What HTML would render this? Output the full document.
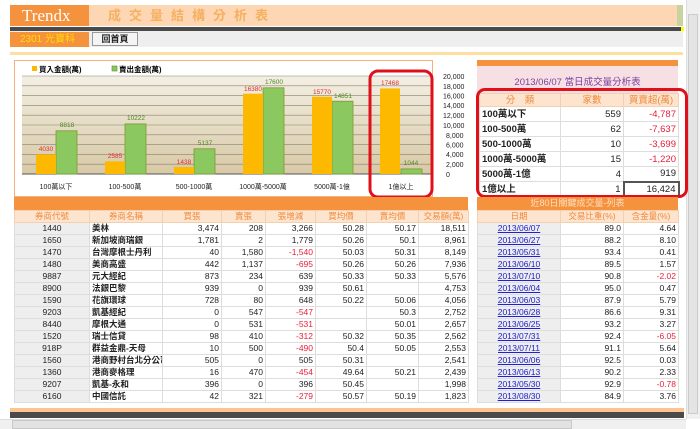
<!DOCTYPE html>
<html><head><meta charset="utf-8"><style>
*{margin:0;padding:0;box-sizing:border-box}
body{width:700px;height:429px;background:#fff;position:relative;overflow:hidden;font-family:"Liberation Sans","Noto Sans CJK TC",sans-serif;font-size:9px;color:#222}
.a{position:absolute}
table{border-collapse:collapse;position:absolute;font-size:8.5px;table-layout:fixed}
td{border:1px solid #ddd;height:12px;line-height:11px;padding:0 2px;text-align:right;white-space:nowrap;overflow:hidden}
th{font-weight:normal;color:#f08a3a;background:#fde4cf;border:1px solid #f5d0b0;height:12px;line-height:11px}
td.c{text-align:center;background:#eee}
td.l{text-align:left;font-weight:bold}
.r{color:#e8203a}
a{color:#2020d0;text-decoration:underline}
</style></head><body>
<!-- header -->
<div class="a" style="left:10px;top:5px;width:667px;height:21px;background:#fdd6b4"></div>
<div class="a" style="left:677px;top:5px;width:6px;height:21px;background:#c8d4a0"></div>
<div class="a" style="left:10px;top:5px;width:79px;height:21px;background:#f5923e;color:#fff;font-family:'Liberation Serif',serif;font-size:17px;line-height:21px;padding-left:12px">Trendx</div>
<div class="a" style="left:108px;top:6px;color:#f5b060;font-size:13px;font-weight:bold;letter-spacing:8px;line-height:19px">成交量結構分析表</div>
<div class="a" style="left:10px;top:27px;width:673px;height:4px;background:#4a4a4a"></div>
<div class="a" style="left:681px;top:27px;width:3px;height:4px;background:#ff0"></div>
<div class="a" style="left:10px;top:31px;width:673px;height:16px;background:#eee"></div>
<div class="a" style="left:10px;top:32px;width:79px;height:15px;background:#f5923e;color:#fd0;font-size:10px;line-height:15px;padding-left:10px">2301 光寶科</div>
<div class="a" style="left:92px;top:32px;width:46px;height:14px;background:#f4f4f4;border:1px solid #999;font-size:9px;font-weight:bold;text-align:center;line-height:12px">回首頁</div>
<div class="a" style="left:10px;top:52px;width:673px;height:3px;background:#fddfa0"></div>
<!-- right scrollbar -->
<div class="a" style="left:686px;top:0;width:14px;height:419px;background:#f0f0f0;border-left:1px solid #ddd"></div>
<div class="a" style="left:688px;top:14px;width:10px;height:400px;background:#e4e4e4;border:1px solid #ccc"></div>
<!-- chart panel -->
<div class="a" style="left:14px;top:60px;width:419px;height:137px;border:1px solid #f5b080;background:#fff"></div>
<svg class="a" style="left:0;top:0" width="700" height="200">
<defs><linearGradient id="g" x1="0" y1="0" x2="0" y2="1"><stop offset="0" stop-color="#f3efe3"/><stop offset="1" stop-color="#d8c9a6"/></linearGradient></defs>
<rect x="22" y="76" width="410" height="98" fill="url(#g)"/>
<g stroke="#8a8070" stroke-width="0.6">
<line x1="22" y1="76" x2="432" y2="76"/><line x1="22" y1="85.8" x2="432" y2="85.8"/><line x1="22" y1="95.6" x2="432" y2="95.6"/><line x1="22" y1="105.4" x2="432" y2="105.4"/><line x1="22" y1="115.2" x2="432" y2="115.2"/><line x1="22" y1="125" x2="432" y2="125"/><line x1="22" y1="134.8" x2="432" y2="134.8"/><line x1="22" y1="144.6" x2="432" y2="144.6"/><line x1="22" y1="154.4" x2="432" y2="154.4"/><line x1="22" y1="164.2" x2="432" y2="164.2"/>
</g>
<line x1="22" y1="174" x2="432" y2="174" stroke="#555" stroke-width="1"/>
<g stroke="#7a9a30" stroke-width="0.8" fill="#8cc860">
<rect x="56" y="130.8" width="21" height="43.2"/><rect x="125" y="123.9" width="21" height="50.1"/><rect x="194" y="148.8" width="21" height="25.2"/><rect x="263" y="87.8" width="21" height="86.2"/><rect x="332" y="101.2" width="21" height="72.8"/><rect x="401" y="168.9" width="21" height="5.1"/>
</g>
<g fill="#fdb900">
<rect x="36" y="154.3" width="20" height="19.7"/><rect x="105" y="161.3" width="20" height="12.7"/><rect x="174" y="167" width="20" height="7"/><rect x="243" y="93.7" width="20" height="80.3"/><rect x="312" y="96.7" width="20" height="77.3"/><rect x="380" y="88.4" width="20" height="85.6"/>
</g>
<g font-size="6.5" text-anchor="middle" font-family="Liberation Sans">
<g fill="#e03030"><text x="46" y="151">4030</text><text x="115" y="158">2585</text><text x="184" y="164">1438</text><text x="253" y="91">16380</text><text x="322" y="94">15770</text><text x="390" y="85">17468</text></g>
<g fill="#4a8a20"><text x="67" y="127">8818</text><text x="136" y="120">10222</text><text x="205" y="145">5137</text><text x="274" y="84">17600</text><text x="343" y="98">14851</text><text x="411" y="165">1044</text></g>
</g>
<g font-size="7" fill="#222" text-anchor="middle" font-family="Liberation Sans,Noto Sans CJK TC"><text x="56" y="189">100萬以下</text><text x="125" y="189">100-500萬</text><text x="194" y="189">500-1000萬</text><text x="263" y="189">1000萬-5000萬</text><text x="332" y="189">5000萬-1億</text><text x="401" y="189">1億以上</text></g>
<g font-size="7" fill="#222" font-family="Liberation Sans"><text x="443" y="79">20,000</text><text x="443" y="89">18,000</text><text x="443" y="98.5">16,000</text><text x="443" y="108">14,000</text><text x="443" y="118">12,000</text><text x="443" y="128">10,000</text><text x="446" y="138">8,000</text><text x="446" y="147.5">6,000</text><text x="446" y="157">4,000</text><text x="446" y="167">2,000</text><text x="446" y="177">0</text></g>
<rect x="32" y="66" width="5" height="5" fill="#fdb900"/><text x="39" y="72" font-size="7.5" font-weight="bold" font-family="Liberation Sans,Noto Sans CJK TC">買入金額(萬)</text>
<rect x="112" y="66" width="5" height="5" fill="#8cc860" stroke="#5a8a20" stroke-width="0.6"/><text x="119" y="72" font-size="7.5" font-weight="bold" font-family="Liberation Sans,Noto Sans CJK TC">賣出金額(萬)</text>
<rect x="370" y="71" width="62" height="126" rx="8" fill="none" stroke="#e0101a" stroke-width="3"/>
</svg>
<!-- right top panel -->
<div class="a" style="left:477px;top:60px;width:201px;height:6px;background:#f5923e"></div>
<div class="a" style="left:477px;top:66px;width:201px;height:30px;background:#f6e0e4;color:#8040a0;font-size:9.5px;text-align:center;padding-top:8px">2013/06/07 當日成交量分析表</div>
<table style="left:479px;top:93px;width:199px;font-size:9.5px">
<colgroup><col style="width:81px"><col style="width:63px"><col style="width:55px"></colgroup>
<tr><th style="height:13px">分　類</th><th>家數</th><th>買賣超(萬)</th></tr>
<tr><td class="l" style="height:15px">100萬以下</td><td>559</td><td class="r">-4,787</td></tr>
<tr><td class="l" style="height:15px">100-500萬</td><td>62</td><td class="r">-7,637</td></tr>
<tr><td class="l" style="height:15px">500-1000萬</td><td>10</td><td class="r">-3,699</td></tr>
<tr><td class="l" style="height:15px">1000萬-5000萬</td><td>15</td><td class="r">-1,220</td></tr>
<tr><td class="l" style="height:15px">5000萬-1億</td><td>4</td><td>919</td></tr>
<tr><td class="l" style="height:15px">1億以上</td><td>1</td><td style="border:2px solid #555">16,424</td></tr>
</table>
<div class="a" style="left:476px;top:88px;width:212px;height:110px;border:3px solid #e0101a;border-radius:9px"></div>
<!-- bottom left -->
<div class="a" style="left:14px;top:197px;width:454px;height:13px;background:#f5923e"></div>
<table style="left:14px;top:210px;width:454px">
<colgroup><col style="width:75px"><col style="width:73px"><col style="width:59px"><col style="width:44px"><col style="width:50px"><col style="width:51px"><col style="width:52px"><col style="width:50px"></colgroup>
<tr><th>券商代號</th><th>券商名稱</th><th>買張</th><th>賣張</th><th>張增減</th><th>買均價</th><th>賣均價</th><th>交易額(萬)</th></tr>
<tr><td class="c">1440</td><td class="l">美林</td><td>3,474</td><td>208</td><td>3,266</td><td>50.28</td><td>50.17</td><td>18,511</td></tr>
<tr><td class="c">1650</td><td class="l">新加坡商瑞銀</td><td>1,781</td><td>2</td><td>1,779</td><td>50.26</td><td>50.1</td><td>8,961</td></tr>
<tr><td class="c">1470</td><td class="l">台灣摩根士丹利</td><td>40</td><td>1,580</td><td class="r">-1,540</td><td>50.03</td><td>50.31</td><td>8,149</td></tr>
<tr><td class="c">1480</td><td class="l">美商高盛</td><td>442</td><td>1,137</td><td class="r">-695</td><td>50.26</td><td>50.26</td><td>7,936</td></tr>
<tr><td class="c">9887</td><td class="l">元大經紀</td><td>873</td><td>234</td><td>639</td><td>50.33</td><td>50.33</td><td>5,576</td></tr>
<tr><td class="c">8900</td><td class="l">法銀巴黎</td><td>939</td><td>0</td><td>939</td><td>50.61</td><td></td><td>4,753</td></tr>
<tr><td class="c">1590</td><td class="l">花旗環球</td><td>728</td><td>80</td><td>648</td><td>50.22</td><td>50.06</td><td>4,056</td></tr>
<tr><td class="c">9203</td><td class="l">凱基經紀</td><td>0</td><td>547</td><td class="r">-547</td><td></td><td>50.3</td><td>2,752</td></tr>
<tr><td class="c">8440</td><td class="l">摩根大通</td><td>0</td><td>531</td><td class="r">-531</td><td></td><td>50.01</td><td>2,657</td></tr>
<tr><td class="c">1520</td><td class="l">瑞士信貸</td><td>98</td><td>410</td><td class="r">-312</td><td>50.32</td><td>50.35</td><td>2,562</td></tr>
<tr><td class="c">918P</td><td class="l">群益金鼎-天母</td><td>10</td><td>500</td><td class="r">-490</td><td>50.4</td><td>50.05</td><td>2,553</td></tr>
<tr><td class="c">1560</td><td class="l">港商野村台北分公司</td><td>505</td><td>0</td><td>505</td><td>50.31</td><td></td><td>2,541</td></tr>
<tr><td class="c">1360</td><td class="l">港商麥格理</td><td>16</td><td>470</td><td class="r">-454</td><td>49.64</td><td>50.21</td><td>2,439</td></tr>
<tr><td class="c">9207</td><td class="l">凱基-永和</td><td>396</td><td>0</td><td>396</td><td>50.45</td><td></td><td>1,998</td></tr>
<tr><td class="c">6160</td><td class="l">中國信託</td><td>42</td><td>321</td><td class="r">-279</td><td>50.57</td><td>50.19</td><td>1,823</td></tr>
</table>
<!-- bottom right -->
<div class="a" style="left:477px;top:197px;width:201px;height:13px;background:#f5923e;color:#fde0c0;font-size:9px;text-align:center;line-height:13px">近80日關鍵成交量-列表</div>
<table style="left:477px;top:210px;width:201px;border:1px solid #f5a060">
<colgroup><col style="width:83px"><col style="width:63px"><col style="width:55px"></colgroup>
<tr><th>日期</th><th>交易比重(%)</th><th>含金量(%)</th></tr>
<tr><td class="c"><a>2013/06/07</a></td><td>89.0</td><td>4.64</td></tr>
<tr><td class="c"><a>2013/06/27</a></td><td>88.2</td><td>8.10</td></tr>
<tr><td class="c"><a>2013/05/31</a></td><td>93.4</td><td>0.41</td></tr>
<tr><td class="c"><a>2013/06/10</a></td><td>89.5</td><td>1.57</td></tr>
<tr><td class="c"><a>2013/07/10</a></td><td>90.8</td><td class="r">-2.02</td></tr>
<tr><td class="c"><a>2013/06/04</a></td><td>95.0</td><td>0.47</td></tr>
<tr><td class="c"><a>2013/06/03</a></td><td>87.9</td><td>5.79</td></tr>
<tr><td class="c"><a>2013/06/28</a></td><td>86.6</td><td>9.31</td></tr>
<tr><td class="c"><a>2013/06/25</a></td><td>93.2</td><td>3.27</td></tr>
<tr><td class="c"><a>2013/07/31</a></td><td>92.4</td><td class="r">-6.05</td></tr>
<tr><td class="c"><a>2013/07/11</a></td><td>91.1</td><td>5.64</td></tr>
<tr><td class="c"><a>2013/06/06</a></td><td>92.5</td><td>0.03</td></tr>
<tr><td class="c"><a>2013/06/13</a></td><td>90.2</td><td>2.33</td></tr>
<tr><td class="c"><a>2013/05/30</a></td><td>92.9</td><td class="r">-0.78</td></tr>
<tr><td class="c"><a>2013/08/30</a></td><td>84.9</td><td>3.76</td></tr>
</table>
<!-- bottom bars -->
<div class="a" style="left:10px;top:408px;width:674px;height:4px;background:#fbc490"></div>
<div class="a" style="left:10px;top:412px;width:674px;height:6px;background:#4a4a4a"></div>
<div class="a" style="left:0;top:419px;width:686px;height:10px;background:#f0f0f0;border-top:1px solid #ddd"></div>
<div class="a" style="left:12px;top:420px;width:560px;height:9px;background:#e2e2e2;border:1px solid #c8c8c8"></div>
</body></html>
